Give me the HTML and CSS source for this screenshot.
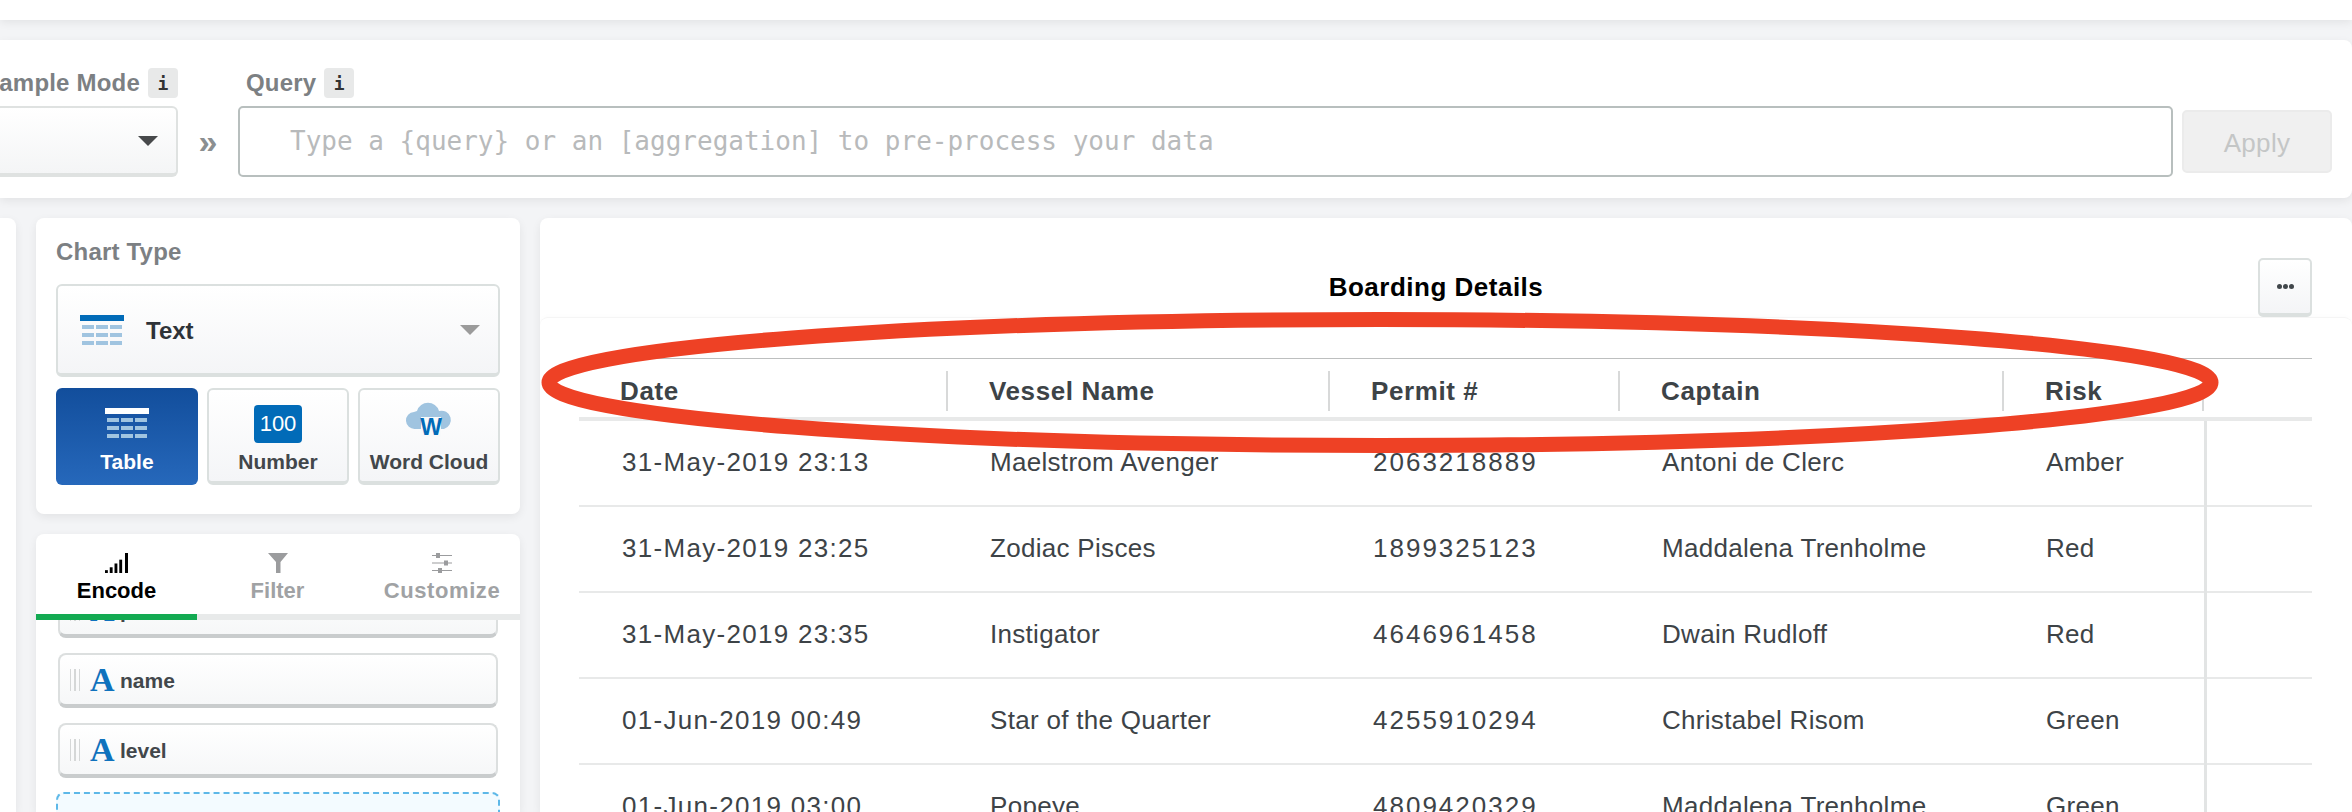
FILE: index.html
```html
<!DOCTYPE html>
<html lang="en">
<head>
  <meta charset="UTF-8">
  <title>Boarding Details</title>
  <link rel="stylesheet" href="styles.css">
</head>
<body>

  <div class="topbar"></div>

  <!-- Query bar -->
  <section class="query-bar">
    <div class="q-group sample">
      <div class="q-label"><span>Sample Mode</span><b class="info">i</b></div>
      <div class="select"><i class="caret"></i></div>
    </div>
    <div class="chevrons">»</div>
    <div class="q-group query">
      <div class="q-label pad"><span>Query</span><b class="info">i</b></div>
      <div class="q-input">Type a {query} or an [aggregation] to pre-process your data</div>
    </div>
    <button class="apply">Apply</button>
  </section>

  <div class="workspace">
    <div class="stub"></div>

    <div class="side">
      <!-- Chart type -->
      <section class="card chart-type">
        <h3>Chart Type</h3>
        <div class="type-select">
          <svg class="tbl-icon" viewBox="0 0 44 30">
            <rect width="44" height="6" fill="#016bb8"/>
            <g fill="#a0c4e0">
              <rect x="2" y="10" width="12" height="4"/><rect x="16" y="10" width="12" height="4"/><rect x="30" y="10" width="12" height="4"/>
              <rect x="2" y="18" width="12" height="4"/><rect x="16" y="18" width="12" height="4"/><rect x="30" y="18" width="12" height="4"/>
              <rect x="2" y="26" width="12" height="4"/><rect x="16" y="26" width="12" height="4"/><rect x="30" y="26" width="12" height="4"/>
            </g>
          </svg>
          <span>Text</span>
          <i class="caret light"></i>
        </div>
        <div class="type-btns">
          <div class="type-btn active">
            <svg class="tbl-icon" viewBox="0 0 44 30">
              <rect width="44" height="6" fill="#fff"/>
              <g fill="#a0c4e0">
                <rect x="2" y="10" width="12" height="4"/><rect x="16" y="10" width="12" height="4"/><rect x="30" y="10" width="12" height="4"/>
                <rect x="2" y="18" width="12" height="4"/><rect x="16" y="18" width="12" height="4"/><rect x="30" y="18" width="12" height="4"/>
                <rect x="2" y="26" width="12" height="4"/><rect x="16" y="26" width="12" height="4"/><rect x="30" y="26" width="12" height="4"/>
              </g>
            </svg>
            <span>Table</span>
          </div>
          <div class="type-btn">
            <div class="num-icon">100</div>
            <span>Number</span>
          </div>
          <div class="type-btn">
            <svg class="cloud-icon" viewBox="0 0 46 38">
              <path d="M9 30a8.500 8.500 0 0 1-1-17 a15 11 0 0 1 3 -1a11.500 11.500 0 0 1 22 0a9 9 0 0 1 5 18z" fill="#a0c4e0"/>
              <rect x="15" y="18" width="20" height="20" fill="#f8f9fa"/>
              <text x="25" y="36" text-anchor="middle" class="cloud-w">W</text>
            </svg>
            <span>Word Cloud</span>
          </div>
        </div>
      </section>

      <!-- Encode -->
      <section class="card encode">
        <div class="tabs">
          <div class="tab on">
            <svg viewBox="0 0 25 21" class="tab-icon">
              <rect x="0" y="18" width="3" height="3"/><rect x="5" y="15" width="3" height="6"/><rect x="10" y="11" width="3" height="10"/><rect x="15" y="7" width="3" height="14"/><rect x="21" y="0" width="4" height="21"/>
            </svg>
            <span>Encode</span>
          </div>
          <div class="tab">
            <svg viewBox="0 0 20 20" class="tab-icon">
              <path d="M0 0h20l-7.500 9v11h-4.500v-11z"/>
            </svg>
            <span>Filter</span>
          </div>
          <div class="tab wide">
            <svg viewBox="0 0 20 20" class="tab-icon">
              <rect y="2" width="20" height="1"/><rect y="9.500" width="20" height="1"/><rect y="17" width="20" height="1"/>
              <rect x="4" y="0" width="4" height="5"/><rect x="12" y="7.500" width="4" height="5"/><rect x="6" y="15" width="4" height="5"/>
            </svg>
            <span>Customize</span>
          </div>
        </div>
        <div class="fields">
          <div class="field first"><i class="grip"></i><em>A</em><span>port</span></div>
          <div class="field"><i class="grip"></i><em>A</em><span>name</span></div>
          <div class="field"><i class="grip"></i><em>A</em><span>level</span></div>
          <div class="drop"></div>
        </div>
      </section>
    </div>

    <!-- Chart -->
    <section class="card main">
      <header class="chart-head">
        <h2>Boarding Details</h2>
        <button class="more"><i></i><i></i><i></i></button>
      </header>
      <div class="chart-body">
        <div class="tbl">
          <div class="row head">
            <div>Date</div><div>Vessel Name</div><div>Permit #</div><div>Captain</div><div>Risk</div>
          </div>
          <div class="row">
            <div class="date">31-May-2019 23:13</div><div>Maelstrom Avenger</div><div class="num">2063218889</div><div>Antoni de Clerc</div><div>Amber</div><div class="end"></div>
          </div>
          <div class="row">
            <div class="date">31-May-2019 23:25</div><div>Zodiac Pisces</div><div class="num">1899325123</div><div>Maddalena Trenholme</div><div>Red</div><div class="end"></div>
          </div>
          <div class="row">
            <div class="date">31-May-2019 23:35</div><div>Instigator</div><div class="num">4646961458</div><div>Dwain Rudloff</div><div>Red</div><div class="end"></div>
          </div>
          <div class="row">
            <div class="date">01-Jun-2019 00:49</div><div>Star of the Quarter</div><div class="num">4255910294</div><div>Christabel Risom</div><div>Green</div><div class="end"></div>
          </div>
          <div class="row">
            <div class="date">01-Jun-2019 03:00</div><div>Popeye</div><div class="num">4809420329</div><div>Maddalena Trenholme</div><div>Green</div><div class="end"></div>
          </div>
        </div>
      </div>
    </section>
  </div>

  <!-- Red hand drawn marker over the table header -->
  <svg class="marker" viewBox="0 0 2352 812">
    <ellipse cx="1380" cy="382.500" rx="831" ry="63" fill="none" stroke="#ee4125" stroke-width="15"/>
  </svg>

</body>
</html>
```

FILE: styles.css
```css
* {
  box-sizing: border-box;
}

body {
  margin: 0;
  height: 812px;
  overflow: hidden;
  background: #f3f4f6;
  font-family: "Liberation Sans", Arial, sans-serif;
  color: #3d4347;
}

.topbar {
  height: 20px;
  background: #fff;
  box-shadow: 0 2px 10px rgba(0, 0, 0, .08);
  position: relative;
}

/* Query bar */
.query-bar {
  margin-top: 20px;
  height: 158px;
  padding: 28px 20px 21px 0;
  display: flex;
  align-items: flex-end;
  background: #fff;
  border-radius: 0 8px 8px 0;
  box-shadow: 0 3px 10px rgba(0, 0, 0, .07);
  overflow: hidden;
}

.q-group {
  display: flex;
  flex-direction: column;
  gap: 8px;
}

.sample {
  width: 178px;
}

.query {
  flex: 1;
}

.q-label {
  height: 30px;
  display: flex;
  align-items: center;
  justify-content: flex-end;
  gap: 8px;
  font-size: 24px;
  font-weight: bold;
  letter-spacing: .2px;
  color: #7c8083;
  white-space: nowrap;
}

.q-label.pad {
  justify-content: flex-start;
  padding-left: 8px;
}

.info {
  flex-shrink: 0;
  width: 30px;
  height: 30px;
  display: flex;
  align-items: center;
  justify-content: center;
  background: #e8e9e9;
  border-radius: 4px;
  font: bold 18px "DejaVu Sans Mono", monospace;
  color: #333;
}

.select {
  height: 71px;
  padding-right: 18px;
  display: flex;
  align-items: center;
  justify-content: flex-end;
  background: linear-gradient(#fff, #f4f5f6);
  border: 2px solid #dfe2e1;
  border-bottom-width: 4px;
  border-left: 0;
  border-radius: 0 6px 6px 0;
}

.caret {
  width: 0;
  height: 0;
  border-left: 10px solid transparent;
  border-right: 10px solid transparent;
  border-top: 10px solid #47494b;
}

.caret.light {
  border-top-color: #9b9b9b;
}

.chevrons {
  width: 60px;
  height: 71px;
  display: flex;
  align-items: center;
  justify-content: center;
  font-size: 34px;
  font-weight: bold;
  color: #8b8f91;
}

.q-input {
  height: 71px;
  padding: 0 0 2px 50px;
  display: flex;
  align-items: center;
  border: 2px solid #b8bfbe;
  border-radius: 5px;
  background: #fff;
  font: 26px "DejaVu Sans Mono", monospace;
  color: #b8babb;
}

.apply {
  width: 150px;
  height: 63px;
  margin: 0 0 4px 9px;
  padding: 3px 0 0;
  background: #f0f0f0;
  border: 2px solid #ebebeb;
  border-radius: 5px;
  font: 26px "Liberation Sans", sans-serif;
  letter-spacing: .3px;
  color: #c4c6c6;
}

/* Workspace */
.workspace {
  margin-top: 20px;
  height: 594px;
  display: flex;
  gap: 20px;
}

.stub {
  width: 16px;
  background: #fff;
  border-radius: 0 8px 0 0;
  box-shadow: 0 3px 10px rgba(0, 0, 0, .07);
}

.side {
  width: 484px;
  display: flex;
  flex-direction: column;
  gap: 20px;
}

.card {
  background: #fff;
  border-radius: 8px;
  box-shadow: 0 3px 10px rgba(0, 0, 0, .07);
}

/* Chart type card */
.chart-type {
  height: 296px;
  padding: 20px 20px 0;
}

.chart-type h3 {
  margin: 0 0 18px;
  height: 28px;
  line-height: 28px;
  font-size: 24px;
  letter-spacing: .2px;
  color: #7c8083;
}

.type-select {
  height: 93px;
  padding: 0 18px 0 22px;
  display: flex;
  align-items: center;
  background: linear-gradient(#fff, #f4f5f7);
  border: 2px solid #dbe0df;
  border-bottom-width: 4px;
  border-radius: 6px;
  font-size: 24px;
  font-weight: bold;
  color: #2e3338;
}

.type-select span {
  margin-left: 22px;
  padding-top: 2px;
  flex: 1;
}

.tbl-icon {
  width: 44px;
  height: 30px;
}

.type-btns {
  margin-top: 11px;
  display: flex;
  gap: 9px;
}

.type-btn {
  width: 142px;
  height: 97px;
  padding-top: 15px;
  display: flex;
  flex-direction: column;
  align-items: center;
  justify-content: space-between;
  padding-bottom: 7px;
  background: linear-gradient(#fff, #f4f5f7);
  border: 2px solid #dbe0df;
  border-bottom-width: 4px;
  border-radius: 6px;
  font-size: 21px;
  font-weight: bold;
  color: #42474b;
}

.type-btn.active {
  padding-top: 20px;
  padding-bottom: 11px;
  background: linear-gradient(#124e9c, #2668bb);
  border: 0;
  color: #fff;
}

.num-icon {
  width: 48px;
  height: 38px;
  background: #016bb8;
  border-radius: 4px;
  text-align: center;
  line-height: 38px;
  font-size: 22px;
  font-weight: normal;
  color: #fff;
}

.cloud-icon {
  width: 46px;
  height: 38px;
  margin-top: -6px;
  overflow: visible;
}

.cloud-w {
  font: bold 23px "Liberation Sans", sans-serif;
  fill: #016bb8;
}

/* Encode card */
.encode {
  flex: 1;
  overflow: hidden;
  border-radius: 8px 8px 0 0;
}

.tabs {
  height: 86px;
  display: flex;
  border-bottom: 6px solid #e8eaea;
  position: relative;
}

.tab {
  width: 161px;
  margin-bottom: -6px;
  padding-top: 19px;
  display: flex;
  flex-direction: column;
  align-items: center;
  gap: 5px;
  border-bottom: 6px solid transparent;
  font-size: 22px;
  font-weight: bold;
  color: #a0a2a4;
}

.tab.wide {
  width: 162px;
  padding-left: 6px;
  letter-spacing: .6px;
  white-space: nowrap;
}

.tab.on {
  border-bottom-color: #13aa52;
  color: #000;
}

.tab-icon {
  height: 20px;
  fill: #9b9c9e;
}

.tab.on .tab-icon {
  fill: #000;
}

.fields {
  height: 192px;
  overflow: hidden;
  padding: 0 20px;
}

.field {
  height: 55px;
  margin: 15px 2px 0;
  padding-left: 10px;
  display: flex;
  align-items: center;
  background: linear-gradient(#fff, #f6f7f8);
  border: 2px solid #dcdfdf;
  border-bottom: 4px solid #c9cccd;
  border-radius: 8px;
  font-size: 21px;
  font-weight: bold;
  color: #42474b;
}

.field span {
  padding-top: 2px;
}

.field.first {
  margin-top: -37px;
}

.grip {
  width: 10px;
  height: 22px;
  border-left: 1px solid #d5d7d7;
  border-right: 1px solid #d5d7d7;
  background: linear-gradient(90deg, transparent 40%, #d5d7d7 40%, #d5d7d7 60%, transparent 60%);
}

.field em {
  width: 24px;
  margin: 0 6px 0 10px;
  font: bold 34px/1 "Liberation Serif", serif;
  color: #0f72bd;
}

.drop {
  height: 60px;
  margin-top: 14px;
  background: #f3fbff;
  border: 2px dashed #5db8e8;
  border-radius: 8px;
}

/* Chart card */
.main {
  flex: 1;
  border-radius: 8px 8px 0 0;
  overflow: hidden;
}

.chart-head {
  height: 99px;
  padding: 40px 40px 0;
  display: flex;
  justify-content: flex-end;
  position: relative;
}

.chart-head h2 {
  flex: 1;
  margin: 0;
  padding: 14px 0 0 34px;
  text-align: center;
  font-size: 26px;
  letter-spacing: .5px;
  line-height: 30px;
  color: #000;
}

.more {
  width: 54px;
  height: 59px;
  padding: 0;
  display: flex;
  align-items: center;
  justify-content: center;
  gap: 1px;
  background: linear-gradient(#fff, #f4f5f7);
  border: 2px solid #dbe0df;
  border-bottom-width: 4px;
  border-radius: 5px;
}

.more i {
  width: 5px;
  height: 5px;
  border-radius: 50%;
  background: #41474b;
}

.chart-body {
  height: 495px;
  padding: 40px 40px 0 39px;
  border-top: 1px solid #f5f5f5;
  border-radius: 8px 8px 0 0;
  box-shadow: 0 -2px 4px rgba(0, 0, 0, .01);
}

.tbl {
  border-top: 1px solid #bdbfbf;
}

.row {
  height: 86px;
  display: grid;
  grid-template-columns: 369px 382px 290px 384px 200px 1fr;
  align-items: center;
  border-bottom: 2px solid #e8e9e9;
  font-size: 26px;
  letter-spacing: .3px;
}

.row > div {
  padding: 0 0 3px 42px;
  white-space: nowrap;
}

.row .end {
  align-self: stretch;
  height: 86px;
  padding: 0;
  border-left: 3px solid #e2e4e4;
}

.row > .date {
  padding-left: 43px;
  letter-spacing: 1.3px;
}

.row > .num {
  padding-left: 43px;
  letter-spacing: 2px;
}

.row.head {
  height: 62px;
  padding-top: 12px;
  align-items: start;
  border-bottom-width: 4px;
  font-weight: bold;
  letter-spacing: .6px;
  line-height: 40px;
}

.row.head > div {
  height: 40px;
  padding: 0 0 0 41px;
  border-right: 2px solid #d8d9d9;
}

.marker {
  position: absolute;
  top: 0;
  left: 0;
  width: 2352px;
  height: 812px;
  pointer-events: none;
}
```
